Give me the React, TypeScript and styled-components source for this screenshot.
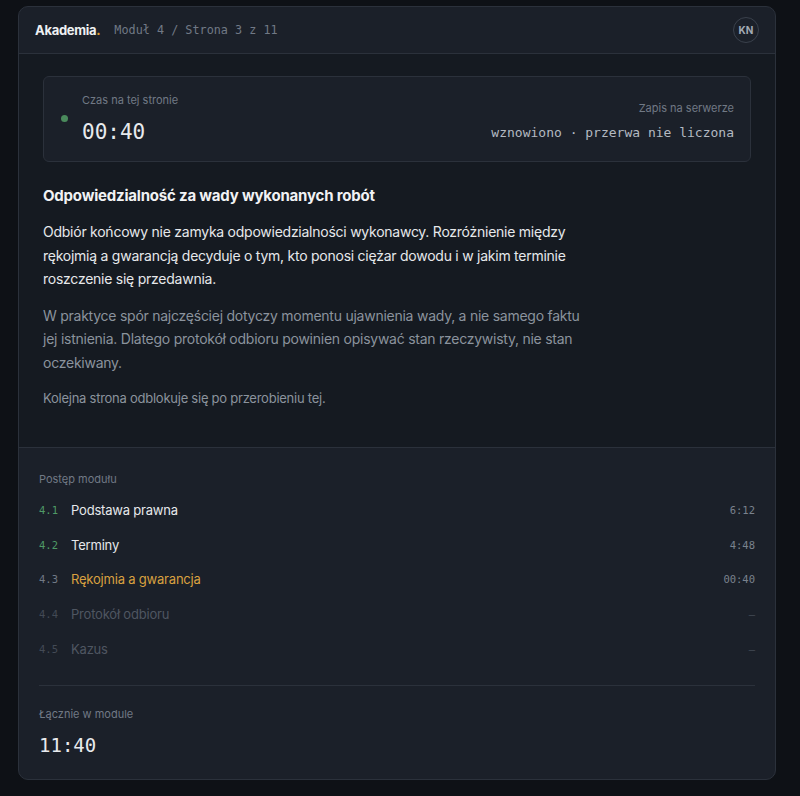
import styled, { createGlobalStyle } from 'styled-components';

const GlobalStyle = createGlobalStyle`
    html, body {
        margin: 0;
        padding: 0;
        background-color: #0e1116;
    }
    body {
        font-family: 'Inter', 'Noto Sans', sans-serif;
        color: #e6e8eb;
    }
`;

const Page = styled.div`
    padding: 6px 24px 16px 18px;
    min-height: 796px;
    box-sizing: border-box;
`;

const Card = styled.div`
    background-color: #1b2029;
    border: 1px solid #2b313b;
    border-radius: 10px;
    overflow: hidden;
`;

const Header = styled.header`
    display: flex;
    align-items: center;
    height: 46px;
    padding: 0 16px 0 16px;
    border-bottom: 1px solid #2b313b;
`;

const Brand = styled.span`
    font-size: 13px;
    font-weight: 700;
    color: #eef0f2;
    letter-spacing: -0.3px;

    span {
        color: #e0a030;
    }
`;

const Crumb = styled.span`
    margin-left: 14px;
    font-family: 'DejaVu Sans Mono', 'Liberation Mono', monospace;
    font-size: 11.8px;
    color: #717985;
`;

const Avatar = styled.div`
    margin-left: auto;
    width: 24px;
    height: 24px;
    border-radius: 50%;
    border: 1px solid #3a414c;
    display: flex;
    align-items: center;
    justify-content: center;
    font-size: 10px;
    font-weight: 700;
    color: #a2aab4;
`;

const Main = styled.main`
    background-color: #151a21;
    padding: 22px 24px 23px 24px;
    border-bottom: 1px solid #2b313b;
`;

const TimerBox = styled.div`
    display: flex;
    align-items: center;
    background-color: #1b2029;
    border: 1px solid #2b313b;
    border-radius: 6px;
    padding: 16px 16px 17px 17px;
`;

const Dot = styled.span`
    width: 7px;
    height: 7px;
    border-radius: 50%;
    background-color: #4a8a5c;
    margin-right: 14px;
    align-self: center;
`;

const TimerCol = styled.div<{ right?: boolean }>`
    display: flex;
    flex-direction: column;
    align-items: ${(props) => (props.right ? 'flex-end' : 'flex-start')};
    gap: ${(props) => (props.right ? '10px' : '13px')};
    margin-left: ${(props) => (props.right ? 'auto' : '0')};
    padding-top: ${(props) => (props.right ? '4px' : '0')};
`;

const SmallLabel = styled.div`
    font-size: 11px;
    color: #717985;
`;

const BigTime = styled.div`
    font-family: 'DejaVu Sans Mono', 'Liberation Mono', monospace;
    font-size: 21px;
    color: #e8eaed;
`;

const StatusText = styled.div`
    font-family: 'DejaVu Sans Mono', 'Liberation Mono', monospace;
    font-size: 13px;
    color: #b4bac2;
`;

const Article = styled.article`
    max-width: 545px;
    margin-top: 24px;
`;

const Title = styled.h2`
    margin: 0 0 15px 0;
    font-size: 15px;
    font-weight: 700;
    color: #f1f2f4;
    letter-spacing: -0.2px;
`;

const Para = styled.p<{ muted?: boolean; small?: boolean }>`
    margin: 0 0 13px 0;
    font-size: ${(props) => (props.small ? '13px' : '14px')};
    line-height: 23.5px;
    letter-spacing: -0.25px;
    color: ${(props) => (props.muted ? '#8b939d' : '#e6e8eb')};
`;

const Progress = styled.section`
    padding: 24px 20px 23px 20px;
`;

const SectionLabel = styled.div`
    font-size: 11px;
    color: #717985;
    margin-bottom: 7px;
`;

const TotalLabel = styled(SectionLabel)`
    margin-bottom: 0;
`;

const Row = styled.div`
    display: flex;
    align-items: center;
    height: 34.7px;
`;

const RowNum = styled.span<{ state: string }>`
    width: 32px;
    font-family: 'DejaVu Sans Mono', 'Liberation Mono', monospace;
    font-size: 10.5px;
    color: ${(props) =>
        props.state === 'done' ? '#4f9a66' : props.state === 'current' ? '#717985' : '#434a55'};
`;

const RowTitle = styled.span<{ state: string }>`
    font-size: 13px;
    letter-spacing: -0.2px;
    color: ${(props) =>
        props.state === 'done' ? '#e6e8eb' : props.state === 'current' ? '#d9a040' : '#4f5661'};
`;

const RowTime = styled.span<{ state: string }>`
    margin-left: auto;
    font-family: 'DejaVu Sans Mono', 'Liberation Mono', monospace;
    font-size: 10.5px;
    color: ${(props) => (props.state === 'locked' ? '#434a55' : '#7a828d')};
`;

const Divider = styled.hr`
    border: none;
    border-top: 1px solid #2b313b;
    margin: 19px 0 21px 0;
`;

const TotalTime = styled.div`
    font-family: 'DejaVu Sans Mono', 'Liberation Mono', monospace;
    font-size: 19px;
    color: #e8eaed;
    margin-top: 13px;
`;

const lessons = [
    { num: '4.1', title: 'Podstawa prawna', time: '6:12', state: 'done' },
    { num: '4.2', title: 'Terminy', time: '4:48', state: 'done' },
    { num: '4.3', title: 'Rękojmia a gwarancja', time: '00:40', state: 'current' },
    { num: '4.4', title: 'Protokół odbioru', time: '–', state: 'locked' },
    { num: '4.5', title: 'Kazus', time: '–', state: 'locked' },
];

export default function App() {
    return (
        <>
            <GlobalStyle />
            <Page>
                <Card>
                    <Header>
                        <Brand>
                            Akademia<span>.</span>
                        </Brand>
                        <Crumb>Moduł 4 / Strona 3 z 11</Crumb>
                        <Avatar>KN</Avatar>
                    </Header>

                    <Main>
                        <TimerBox>
                            <Dot />
                            <TimerCol>
                                <SmallLabel>Czas na tej stronie</SmallLabel>
                                <BigTime>00:40</BigTime>
                            </TimerCol>
                            <TimerCol right>
                                <SmallLabel>Zapis na serwerze</SmallLabel>
                                <StatusText>wznowiono · przerwa nie liczona</StatusText>
                            </TimerCol>
                        </TimerBox>

                        <Article>
                            <Title>Odpowiedzialność za wady wykonanych robót</Title>
                            <Para>
                                Odbiór końcowy nie zamyka odpowiedzialności wykonawcy. Rozróżnienie między
                                rękojmią a gwarancją decyduje o tym, kto ponosi ciężar dowodu i w jakim terminie
                                roszczenie się przedawnia.
                            </Para>
                            <Para muted>
                                W praktyce spór najczęściej dotyczy momentu ujawnienia wady, a nie samego faktu
                                jej istnienia. Dlatego protokół odbioru powinien opisywać stan rzeczywisty, nie stan
                                oczekiwany.
                            </Para>
                            <Para muted small>
                                Kolejna strona odblokuje się po przerobieniu tej.
                            </Para>
                        </Article>
                    </Main>

                    <Progress>
                        <SectionLabel>Postęp modułu</SectionLabel>
                        {lessons.map((l) => (
                            <Row key={l.num}>
                                <RowNum state={l.state}>{l.num}</RowNum>
                                <RowTitle state={l.state}>{l.title}</RowTitle>
                                <RowTime state={l.state}>{l.time}</RowTime>
                            </Row>
                        ))}
                        <Divider />
                        <TotalLabel>Łącznie w module</TotalLabel>
                        <TotalTime>11:40</TotalTime>
                    </Progress>
                </Card>
            </Page>
        </>
    );
}
